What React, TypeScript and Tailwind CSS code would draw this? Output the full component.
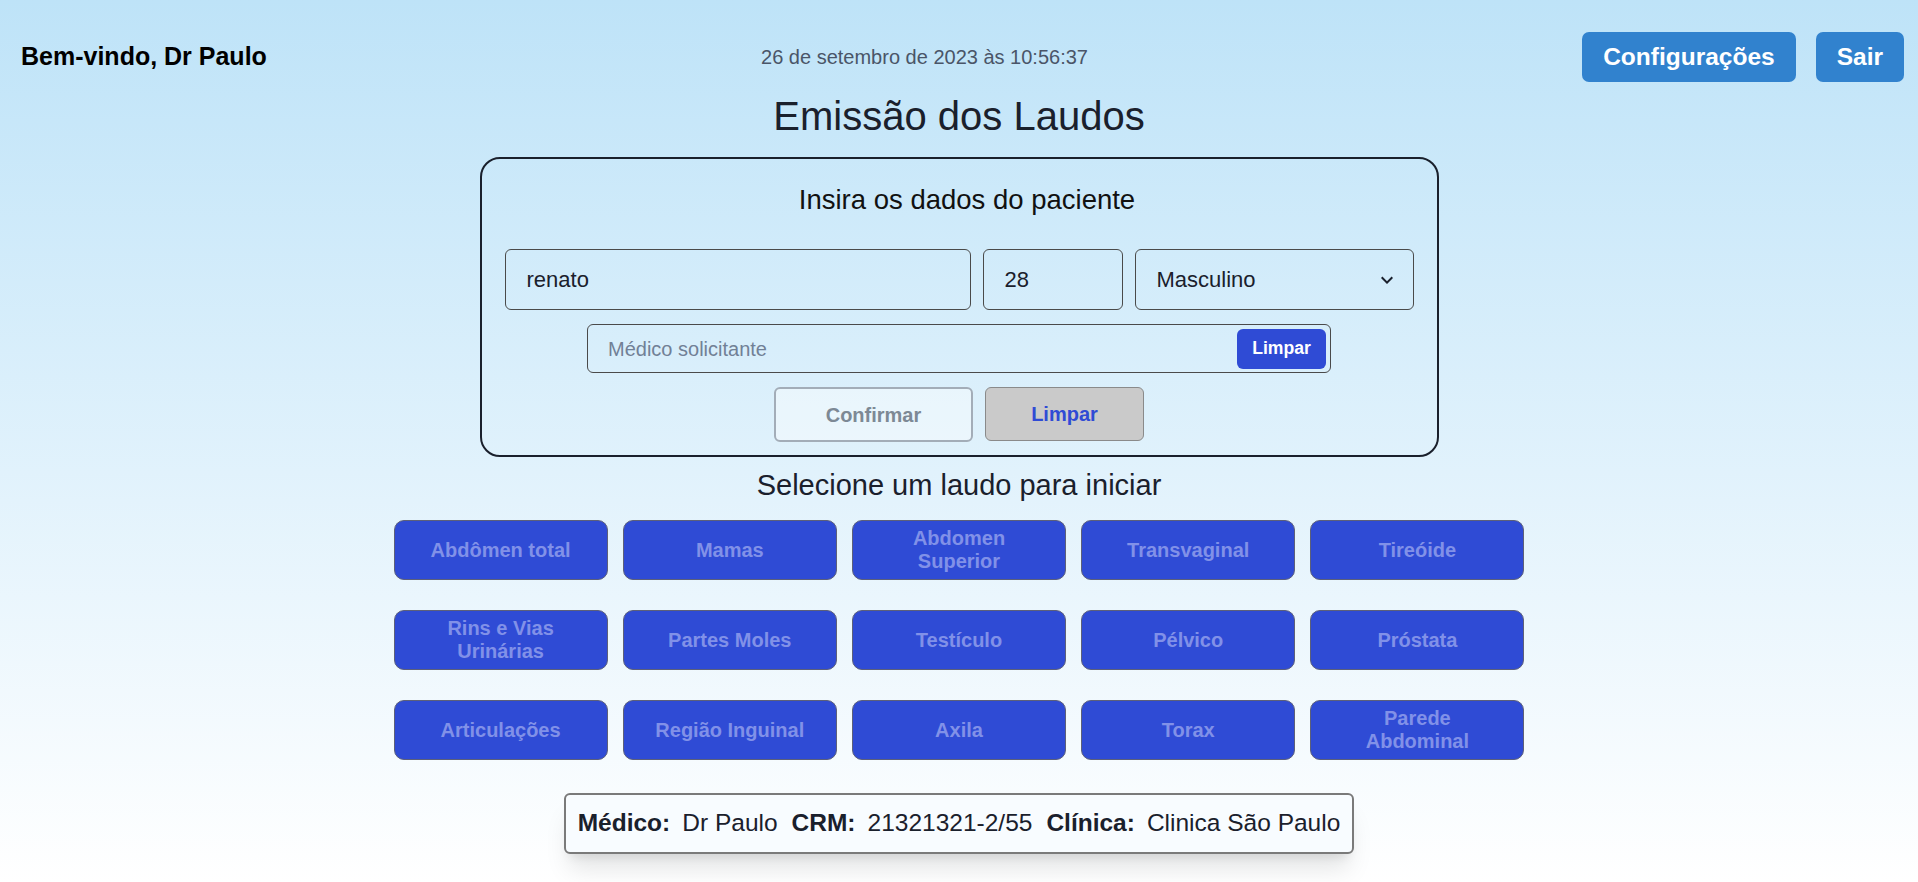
import React from 'react'

const laudos = [
  'Abdômen total',
  'Mamas',
  'Abdomen Superior',
  'Transvaginal',
  'Tireóide',
  'Rins e Vias Urinárias',
  'Partes Moles',
  'Testículo',
  'Pélvico',
  'Próstata',
  'Articulações',
  'Região Inguinal',
  'Axila',
  'Torax',
  'Parede Abdominal',
]

function Header() {
  return (
    <div className="flex items-center justify-between pl-[21px] pr-[14px] pt-[32px]">
      <span className="text-[25px] font-bold text-black">Bem-vindo, Dr Paulo</span>
      <span className="text-[20px] text-[#4a5568]">26 de setembro de 2023 às 10:56:37</span>
      <div className="flex gap-[20px]">
        <button className="h-[50px] px-[21px] rounded-[7px] bg-[#3182ce] text-white text-[24.5px] font-bold">
          Configurações
        </button>
        <button className="h-[50px] px-[21px] rounded-[7px] bg-[#3182ce] text-white text-[24.5px] font-bold">
          Sair
        </button>
      </div>
    </div>
  )
}

function PatientForm() {
  return (
    <div className="mx-auto mt-[18px] w-[959px] rounded-[20px] border-2 border-[#1a202c] px-[23px] pt-[25px] pb-[13px]">
      <h2 className="pl-[16px] text-center text-[27.5px] leading-[32px] text-[#111]">Insira os dados do paciente</h2>

      {/* nome / idade / sexo */}
      <div className="mt-[33px] flex gap-[12px]">
        <div className="flex h-[61px] w-[466px] items-center rounded-[6px] border border-[#4a4a4a] px-[21px] text-[22px] text-[#1a202c]">
          renato
        </div>
        <div className="flex h-[61px] w-[140px] items-center rounded-[6px] border border-[#4a4a4a] px-[21px] text-[22px] text-[#1a202c]">
          28
        </div>
        <div className="flex h-[61px] flex-1 items-center justify-between rounded-[6px] border border-[#4a4a4a] pl-[21px] pr-[14px] text-[22px] text-[#1a202c]">
          <span>Masculino</span>
          <svg viewBox="0 0 24 24" className="h-[24px] w-[24px]" fill="#1a202c">
            <path d="M16.59 8.59L12 13.17 7.41 8.59 6 10l6 6 6-6z" />
          </svg>
        </div>
      </div>

      {/* medico solicitante */}
      <div className="mx-auto mt-[14px] flex h-[49px] w-[744px] items-center justify-between rounded-[6px] border border-[#4a4a4a] pl-[20px] pr-[4px]">
        <span className="text-[20px] text-[#718096]">Médico solicitante</span>
        <button className="h-[40px] w-[89px] rounded-[6px] bg-[#2f4bd5] text-[17.6px] font-bold text-white">
          Limpar
        </button>
      </div>

      <div className="mt-[14px] flex justify-center gap-[12px]">
        <button className="h-[55px] w-[199px] rounded-[6px] border-2 border-[#a3adb8] bg-white/40 text-[20px] font-bold text-[#7d8995]">
          Confirmar
        </button>
        <button className="h-[54px] w-[159px] rounded-[6px] border border-[#8a8a8a] bg-[#cacaca] text-[20px] font-bold text-[#2f4bd5]">
          Limpar
        </button>
      </div>
    </div>
  )
}

function LaudoGrid() {
  return (
    <div className="mx-auto mt-[19px] grid w-[1131px] grid-cols-5 gap-x-[15px] gap-y-[30px]">
      {laudos.map((l) => (
        <button
          key={l}
          className="flex h-[60px] items-center justify-center rounded-[10px] border border-[#5d6079] bg-[#2f4bd5] px-[30px] text-center text-[20px] font-bold leading-[23px] text-[#8191e8]"
        >
          {l}
        </button>
      ))}
    </div>
  )
}

function Footer() {
  return (
    <div className="mt-[33px] flex justify-center">
      <div className="flex h-[61px] items-center gap-[14px] rounded-[6px] border-2 border-[#7a7a7a] bg-[#f8fcff] px-[12px] text-[24.5px] text-[#1a202c] shadow-xl">
        <span className="flex gap-[12px]">
          <b>Médico:</b>
          <span>Dr Paulo</span>
        </span>
        <span className="flex gap-[12px]">
          <b>CRM:</b>
          <span>21321321-2/55</span>
        </span>
        <span className="flex gap-[12px]">
          <b>Clínica:</b>
          <span>Clinica São Paulo</span>
        </span>
      </div>
    </div>
  )
}

export default function App() {
  return (
    <div
      className="min-h-screen bg-gradient-to-b from-[#bee3f8] to-white pb-[30px]"
      style={{ fontFamily: '"Liberation Sans", Arial, sans-serif' }}
    >
      <Header />
      <h1 className="mt-[11px] text-center text-[40px] leading-[46px] text-[#1a202c]">Emissão dos Laudos</h1>
      <PatientForm />
      <h2 className="mt-[12px] text-center text-[29px] leading-[32px] text-[#1a202c]">Selecione um laudo para iniciar</h2>
      <LaudoGrid />
      <Footer />
    </div>
  )
}
